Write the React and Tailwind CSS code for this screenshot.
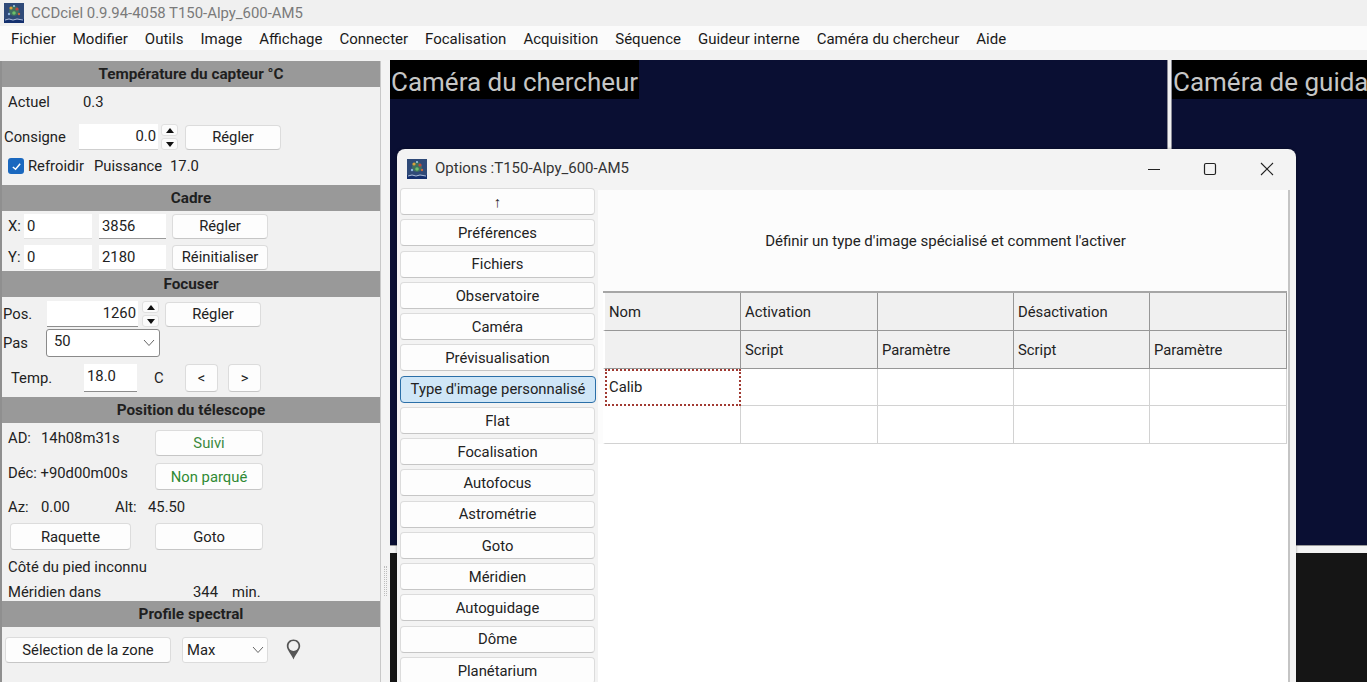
import React from "react";

const Logo = ({ className }) => (
  <svg viewBox="0 0 20 20" className={className}>
    <rect width="20" height="20" fill="#2f4a78" />
    <rect y="16" width="20" height="4" fill="#14306e" />
    <circle cx="10" cy="8" r="5" fill="#3f6f5f" />
    <circle cx="7" cy="5" r="1.6" fill="#d9a23a" />
    <circle cx="13" cy="6" r="1.6" fill="#c2453d" />
    <circle cx="10" cy="10" r="1.8" fill="#6bc06a" />
    <circle cx="5" cy="11" r="1.2" fill="#8fb7e0" />
    <circle cx="15" cy="11" r="1.2" fill="#c9683e" />
    <circle cx="10" cy="3" r="1" fill="#a5d0ea" />
    <path d="M1 17 L5 16 L9 17 L13 16 L19 17" stroke="#d7e3f5" strokeWidth="0.8" fill="none" />
  </svg>
);

const Header = ({ children }) => (
  <div className="h-[26px] bg-[#999999] flex items-center justify-center font-bold text-[#1f1f1f] text-[15.3px] shrink-0">
    {children}
  </div>
);

const Btn = ({ className = "", children }) => (
  <div className={"bg-[#fdfdfd] border border-[#dcdcdc] border-b-[#c6c6c6] rounded-[4px] flex items-center justify-center shrink-0 " + className}>
    {children}
  </div>
);

const Field = ({ className = "", children }) => (
  <div className={"bg-white border-b flex items-center shrink-0 " + className}>{children}</div>
);

const Spin = ({ className = "" }) => (
  <div className={"flex flex-col justify-between h-full w-[17px] shrink-0 " + className}>
    <div className="h-[12px] bg-[#fbfbfb] border border-[#e0e0e0] rounded-[3px] flex items-center justify-center">
      <div className="w-0 h-0 border-l-[4px] border-r-[4px] border-b-[5px] border-l-transparent border-r-transparent border-b-[#111]" />
    </div>
    <div className="h-[12px] bg-[#fbfbfb] border border-[#e0e0e0] rounded-[3px] flex items-center justify-center">
      <div className="w-0 h-0 border-l-[4px] border-r-[4px] border-t-[5px] border-l-transparent border-r-transparent border-t-[#111]" />
    </div>
  </div>
);

const Chevron = () => (
  <svg viewBox="0 0 12 8" className="w-[12px] h-[8px]" fill="none" stroke="#666" strokeWidth="1">
    <path d="M1 1 L6 6.5 L11 1" />
  </svg>
);

const menu = ["Fichier", "Modifier", "Outils", "Image", "Affichage", "Connecter", "Focalisation", "Acquisition", "Séquence", "Guideur interne", "Caméra du chercheur", "Aide"];
const sidebar = ["↑", "Préférences", "Fichiers", "Observatoire", "Caméra", "Prévisualisation", "Type d'image personnalisé", "Flat", "Focalisation", "Autofocus", "Astrométrie", "Goto", "Méridien", "Autoguidage", "Dôme", "Planétarium"];

const HCell = ({ children, className = "" }) => (
  <div className={"bg-[#f0f0f0] border-r border-b border-[#979797] flex items-center pl-[4px] pt-[1px] " + className}>{children}</div>
);
const Cell = ({ children, className = "" }) => (
  <div className={"bg-white border-r border-b border-[#d2d2d2] flex items-center pl-[4px] " + className}>{children}</div>
);

export default function App() {
  return (
    <div
      className="relative w-[1367px] h-[682px] overflow-hidden bg-[#f2f2f2] text-[#222] text-[14.8px] flex flex-col"
      style={{ fontFamily: '"Roboto", "Liberation Sans", sans-serif' }}
    >
      {/* Title bar */}
      <div className="h-[26px] bg-[#f0f0f0] flex items-center pl-[4px] shrink-0">
        <Logo className="w-[20px] h-[20px]" />
        <span className="ml-[7px] text-[#7a7a7a] text-[14.9px]">CCDciel 0.9.94-4058 T150-Alpy_600-AM5</span>
      </div>
      {/* Menu */}
      <div className="h-[24px] bg-[#fbfbfb] flex items-center pl-[11px] pt-[2px] gap-[17px] shrink-0 text-[15px] text-[#1a1a1a]">
        {menu.map((m) => (
          <span key={m}>{m}</span>
        ))}
      </div>
      <div className="h-[11px] shrink-0" />

      {/* Main */}
      <div className="flex flex-1 min-h-0">
        {/* Left panel */}
        <div className="w-[381px] shrink-0 border-l-2 border-l-[#8f8f8f] border-r border-r-[#c8c8c8] bg-[#f1f1f1] flex flex-col">
          <Header>Température du capteur °C</Header>
          <div className="h-[98px] shrink-0">
            <div className="h-[31px] flex items-center pl-[6px]">
              <span className="w-[75px]">Actuel</span>
              <span>0.3</span>
            </div>
            <div className="mt-[6px] h-[26px] flex items-center pl-[2px]">
              <span className="w-[75px]">Consigne</span>
              <Field className="w-[79px] h-full justify-end pr-[2px] border-[#cfcfcf]">0.0</Field>
              <Spin className="ml-[3px]" />
              <Btn className="ml-[7px] w-[96px] h-[25px]">Régler</Btn>
            </div>
            <div className="mt-[6px] h-[20px] flex items-center pl-[6px]">
              <div className="w-[16px] h-[16px] rounded-[3px] bg-[#1a68bf] flex items-center justify-center">
                <svg viewBox="0 0 12 12" className="w-[11px] h-[11px]" fill="none" stroke="#fff" strokeWidth="1.6">
                  <path d="M2 6.5 L5 9 L10 3" />
                </svg>
              </div>
              <span className="ml-[4px] w-[66px]">Refroidir</span>
              <span className="w-[76px]">Puissance</span>
              <span>17.0</span>
            </div>
          </div>

          <Header>Cadre</Header>
          <div className="h-[60px] shrink-0">
            <div className="mt-[3px] h-[25px] flex items-center pl-[6px]">
              <span className="w-[16px]">X:</span>
              <Field className="w-[68px] h-full pl-[3px] border-[#e0e0e0]">0</Field>
              <Field className="ml-[7px] w-[67px] h-full pl-[3px] border-[#9a9a9a]">3856</Field>
              <Btn className="ml-[6px] w-[96px] h-[25px]">Régler</Btn>
            </div>
            <div className="mt-[6px] h-[25px] flex items-center pl-[6px]">
              <span className="w-[16px]">Y:</span>
              <Field className="w-[68px] h-full pl-[3px] border-[#e0e0e0]">0</Field>
              <Field className="ml-[7px] w-[67px] h-full pl-[3px] border-[#e0e0e0]">2180</Field>
              <Btn className="ml-[6px] w-[96px] h-[25px]">Réinitialiser</Btn>
            </div>
          </div>

          <Header>Focuser</Header>
          <div className="h-[100px] shrink-0">
            <div className="mt-[4px] h-[26px] flex items-center pl-[1px]">
              <span className="w-[44px] pt-[1px]">Pos.</span>
              <Field className="w-[91px] h-full justify-end pr-[2px] border-[#8d8d8d]">1260</Field>
              <Spin className="ml-[4px]" />
              <Btn className="ml-[6px] w-[96px] h-[25px] pt-[1px]">Régler</Btn>
            </div>
            <div className="mt-[2px] h-[28px] flex items-center pl-[1px]">
              <span className="w-[43px]">Pas</span>
              <div className="w-[114px] h-full bg-white border border-[#8a8a8a] rounded-[3px] flex items-center justify-between pl-[7px] pr-[4px]">
                <span className="pb-[3px]">50</span>
                <Chevron />
              </div>
            </div>
            <div className="mt-[7px] h-[28px] flex items-center pl-[9px]">
              <span className="w-[73px]">Temp.</span>
              <Field className="w-[53px] h-full pl-[3px] pb-[2px] border-[#8d8d8d]">18.0</Field>
              <span className="ml-[17px] w-[31px]">C</span>
              <Btn className="w-[33px] h-full">&lt;</Btn>
              <Btn className="ml-[10px] w-[33px] h-full">&gt;</Btn>
            </div>
          </div>

          <Header>Position du télescope</Header>
          <div className="h-[178px] shrink-0">
            <div className="mt-[7px] h-[26px] flex pl-[6px]">
              <span className="w-[33px] leading-[16px]">AD:</span>
              <span className="w-[114px] leading-[16px]">14h08m31s</span>
              <Btn className="w-[108px] h-full text-[#3b8a3e] pt-[1px]">Suivi</Btn>
            </div>
            <div className="mt-[7px] h-[27px] flex pl-[6px]">
              <span className="w-[147px] leading-[20px] whitespace-nowrap">Déc: +90d00m00s</span>
              <Btn className="w-[108px] h-full text-[#2f8a34] pt-[1px]">Non parqué</Btn>
            </div>
            <div className="mt-[6px] h-[22px] flex items-center pl-[6px]">
              <span className="w-[33px]">Az:</span>
              <span className="w-[74px]">0.00</span>
              <span className="w-[33px]">Alt:</span>
              <span>45.50</span>
            </div>
            <div className="mt-[5px] h-[27px] flex items-center pl-[8px]">
              <Btn className="w-[121px] h-full pt-[1px]">Raquette</Btn>
              <Btn className="ml-[24px] w-[108px] h-full pt-[1px]">Goto</Btn>
            </div>
            <div className="mt-[6px] h-[22px] flex items-center pl-[6px]">Côté du pied inconnu</div>
            <div className="mt-[4px] h-[19px] flex items-center pl-[6px] pt-[1px]">
              <span className="w-[185px]">Méridien dans</span>
              <span className="w-[39px]">344</span>
              <span>min.</span>
            </div>
          </div>

          <Header>Profile spectral</Header>
          <div className="mt-[10px] h-[26px] flex items-center pl-[3px]">
            <Btn className="w-[166px] h-full">Sélection de la zone</Btn>
            <div className="ml-[11px] w-[86px] h-full bg-[#fdfdfd] border border-[#dcdcdc] rounded-[3px] flex items-center justify-between pl-[4px] pr-[3px]">
              <span>Max</span>
              <Chevron />
            </div>
            <svg viewBox="0 0 15 21" className="ml-[18px] mb-[2px] w-[15px] h-[21px]">
              <path d="M7.5 0.5 C3.4 0.5 0.8 3.4 0.8 6.9 C0.8 10.8 5.4 15 7.5 20.5 C9.6 15 14.2 10.8 14.2 6.9 C14.2 3.4 11.6 0.5 7.5 0.5 Z" fill="#555" />
              <circle cx="7.5" cy="7" r="5" fill="#f1f1f1" />
            </svg>
          </div>
        </div>

        {/* Splitter */}
        <div className="w-[9px] shrink-0 bg-[#f3f3f3] relative">
          <div className="absolute left-[3px] top-[505px] h-[30px] w-[3px] border-x border-dotted border-[#bdbdbd]" />
        </div>

        {/* Viewers */}
        <div className="flex-1 min-w-0 flex flex-col -mt-[1px]">
          <div className="h-[485px] shrink-0 flex">
            <div className="w-[777px] shrink-0 bg-[#0a0f33]">
              <div className="inline-block h-[39px] bg-black text-[#c6c6c6] text-[26px] leading-[45px] pl-[1px] pr-[1px]">Caméra du chercheur</div>
            </div>
            <div className="w-[5px] shrink-0 bg-[#f0f0f0] border-x border-[#8a8a96]" />
            <div className="flex-1 min-w-0 bg-[#0a0f33] overflow-hidden">
              <div className="h-[39px] bg-black text-[#c6c6c6] text-[26px] leading-[45px] pl-[1px] whitespace-nowrap overflow-hidden">Caméra de guidage</div>
            </div>
          </div>
          <div className="h-[8px] shrink-0 bg-[#f3f3f3] border-t border-[#9a9a9a]" />
          <div className="flex-1 bg-[#151515]" />
        </div>
      </div>

      {/* Dialog window */}
      <div className="absolute left-[397px] top-[149px] w-[899px] h-[560px] bg-[#f3f3f3] rounded-t-[8px] flex flex-col shadow-[0_0_3px_rgba(0,0,0,0.35)]">
        <div className="h-[39px] flex items-center pl-[10px] shrink-0">
          <Logo className="w-[20px] h-[20px]" />
          <span className="ml-[8px] text-[#333] text-[15px]">Options :T150-Alpy_600-AM5</span>
          <div className="ml-auto flex items-center">
            <svg viewBox="0 0 14 14" className="w-[14px] h-[14px]" stroke="#222" strokeWidth="1" fill="none"><path d="M1 7.5 H13" /></svg>
            <svg viewBox="0 0 14 14" className="ml-[42px] w-[14px] h-[14px]" stroke="#222" strokeWidth="1.2" fill="none"><rect x="1.5" y="1.5" width="11" height="11" rx="1.5" /></svg>
            <svg viewBox="0 0 14 14" className="ml-[43px] mr-[22px] w-[14px] h-[14px]" stroke="#222" strokeWidth="1.1" fill="none"><path d="M1 1 L13 13 M13 1 L1 13" /></svg>
          </div>
        </div>
        <div className="flex flex-1 min-h-0">
          <div className="w-[201px] shrink-0 pl-[3px] flex flex-col gap-[4.25px]">
            {sidebar.map((s, i) =>
              i === 6 ? (
                <div key={i} className="w-[196px] h-[27px] shrink-0 bg-[#cfe6f7] border border-[#2b6fa8] rounded-[4px] flex items-center justify-center whitespace-nowrap pt-[1px]">{s}</div>
              ) : (
                <Btn key={i} className="w-[195px] h-[27px] pt-[1px]">{s}</Btn>
              )
            )}
          </div>
          <div className="w-[692px] shrink-0 mt-[2px] bg-[#fcfcfc] border-r-2 border-[#c4c4c4] flex flex-col">
            <div className="h-[101px] shrink-0 flex items-center justify-center text-[15px] pl-[5px] pt-[1px]">Définir un type d'image spécialisé et comment l'activer</div>
            <div className="ml-[5px] border-t-2 border-[#a6a6a6] grid grid-cols-[138px_137px_136px_136px_137px] grid-rows-[38px_38px_37px_38px] w-[684px]">
              <HCell className="border-l-2 border-l-white">Nom</HCell>
              <HCell>Activation</HCell>
              <HCell />
              <HCell>Désactivation</HCell>
              <HCell />
              <HCell className="border-l-2 border-l-white" />
              <HCell>Script</HCell>
              <HCell>Paramètre</HCell>
              <HCell>Script</HCell>
              <HCell>Paramètre</HCell>
              <div className="ml-[2px] bg-white border-2 border-dotted border-[#a13a32] flex items-center pl-[2px]">Calib</div>
              <Cell />
              <Cell />
              <Cell />
              <Cell />
              <Cell className="border-l-2 border-l-white" />
              <Cell />
              <Cell />
              <Cell />
              <Cell />
            </div>
            <div className="flex-1 bg-white" />
          </div>
        </div>
      </div>
    </div>
  );
}
